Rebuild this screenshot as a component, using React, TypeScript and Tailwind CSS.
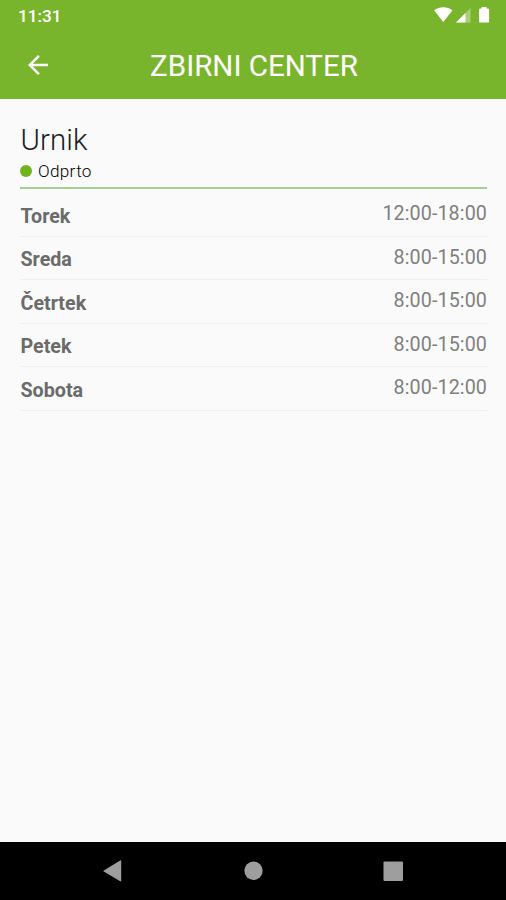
interface ScheduleEntry {
  day: string;
  hours: string;
}

const SCHEDULE: ScheduleEntry[] = [
  { day: 'Torek', hours: '12:00-18:00' },
  { day: 'Sreda', hours: '8:00-15:00' },
  { day: 'Četrtek', hours: '8:00-15:00' },
  { day: 'Petek', hours: '8:00-15:00' },
  { day: 'Sobota', hours: '8:00-12:00' },
];

export default function App() {
  return (
    <div className="flex h-[900px] w-[506px] flex-col overflow-hidden bg-[#fafafa] font-['Roboto',sans-serif]">
      <header className="h-[98.5px] shrink-0 bg-[#79b52c] text-white">
        <StatusBar />
        <Toolbar title="ZBIRNI CENTER" />
      </header>
      <main className="flex-1 pt-[23.5px] pr-[19px] pl-5">
        <ScheduleHeader />
        <ul className="pt-[4px]">
          {SCHEDULE.map((entry) => (
            <ScheduleRow key={entry.day} entry={entry} />
          ))}
        </ul>
      </main>
      <NavigationBar />
    </div>
  );
}

function StatusBar() {
  return (
    <div className="flex h-8 items-center justify-between pr-[16px] pl-[18px]">
      <span className="text-[17.2px] leading-8 font-medium">11:31</span>
      <svg className="mb-[2px] h-4 w-14" viewBox="0 0 56 16" fill="currentColor">
        <path d="M0 3.2C5.2-.9 13.3-.9 18.5 3.2L9.3 15z" />
        <path d="M36.5 1v14.5H22z" opacity=".35" />
        <path d="M31.5 6v9.5H22z" />
        <path d="M47.6 1.6V0h5v1.6h1.3q1.2 0 1.2 1.2v11.6q0 1.2-1.2 1.2h-7.6q-1.2 0-1.2-1.2V2.8q0-1.2 1.2-1.2z" />
      </svg>
    </div>
  );
}

function Toolbar({ title }: { title: string }) {
  return (
    <div className="grid h-[66px] grid-cols-[75px_1fr_73px] items-center">
      <button className="flex h-full items-center justify-center" aria-label="Nazaj">
        <svg className="mb-px h-[30px] w-[30px]" viewBox="0 0 24 24" fill="currentColor">
          <path d="M20 11H7.83l5.59-5.59L12 4l-8 8 8 8 1.41-1.41L7.83 13H20v-2z" />
        </svg>
      </button>
      <h1 className="pt-[2px] text-center text-[29.5px] leading-9 whitespace-nowrap">{title}</h1>
    </div>
  );
}

function ScheduleHeader() {
  return (
    <div className="border-b-2 border-[#a5d095] pb-[3px]">
      <h2 className="pl-[0.5px] text-[29.5px] leading-9 font-light tracking-[0.1px] text-[#202020]">Urnik</h2>
      <div className="flex h-[26px] items-center gap-[6px]">
        <span className="mb-px h-3 w-3 rounded-full bg-[#73b41d]" />
        <span className="text-[17.2px] leading-6 font-light tracking-[0.3px] text-black">Odprto</span>
      </div>
    </div>
  );
}

function ScheduleRow({ entry }: { entry: ScheduleEntry }) {
  return (
    <li className="flex h-[43.6px] items-start justify-between border-b border-[#f0f0f0]">
      <span className="pt-[11.5px] pl-[0.5px] text-[19.7px] leading-6 font-bold text-[#6b6b6b]">{entry.day}</span>
      <span className="pt-[9px] text-[19.7px] leading-6 tracking-[0.1px] text-[#808080]">{entry.hours}</span>
    </li>
  );
}

function NavigationBar() {
  return (
    <nav className="flex h-[58px] shrink-0 justify-center bg-black">
      <svg className="h-[58px] w-[300px]" viewBox="0 0 300 58" fill="#9e9e9e">
        <path d="M0 29 17.2 18.5q1-.6 1 .6v19.6q0 1.2-1 .6z" />
        <circle cx="150.5" cy="28.8" r="9.2" />
        <rect x="280.5" y="19.5" width="19.5" height="19.5" rx="1" />
      </svg>
    </nav>
  );
}
